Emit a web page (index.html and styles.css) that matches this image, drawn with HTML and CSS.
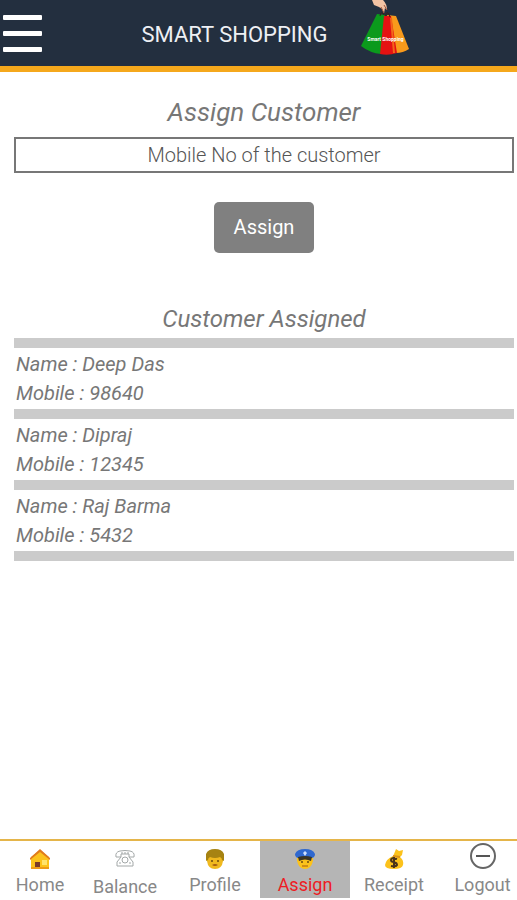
FILE: index.html
```html
<!DOCTYPE html>
<html lang="en">
<head>
    <meta charset="UTF-8">
    <meta name="viewport" content="width=device-width, initial-scale=1.0">
    <title>Smart Shopping</title>
    <link rel="stylesheet" href="styles.css">
</head>
<body>
    <header class="header">
        <button class="menu" type="button" aria-label="Menu">
            <span></span>
            <span></span>
            <span></span>
        </button>
        <div class="brand">
            <h1>SMART SHOPPING</h1>
            <div class="logo">
                <svg viewBox="0 0 50 56" width="50" height="56" aria-hidden="true">
                    <path d="M17 14 L1 46 Q10 53 21 54 L25 15 Z" fill="#0b9a1c"/>
                    <path d="M27 15 L36 16 L49 49 Q43 53 36 53 Z" fill="#f99a1b"/>
                    <path d="M24 16 L31 16 L37 53 Q28 56 20 54 Z" fill="#e51212"/>
                    <path d="M31 18 L34 53" stroke="#f3661a" stroke-width="2"/>
                    <path d="M20 16 Q21 10 24 15 M25 16 Q28 9 30 17" fill="none" stroke="#3a2418" stroke-width="1"/>
                    <path d="M12 0 L23 0 Q27 4 27 10 L25 8 L24 13 L22 9 L19 7 L14 5 Z" fill="#f3c3a4"/>
                    <path d="M21 7 L24 13 M24 5 L27 10" fill="none" stroke="#a5583c" stroke-width="1"/>
                </svg>
                <span class="logo-text">Smart Shopping</span>
            </div>
        </div>
    </header>

    <main class="container">
        <form class="assign">
            <h2><label for="mobile">Assign Customer</label></h2>
            <input id="mobile" type="text" placeholder="Mobile No of the customer">
            <button type="button">Assign</button>
        </form>

        <h2 class="list-title">Customer Assigned</h2>
        <ul class="customers">
            <li>
                <p>Name : Deep Das</p>
                <p>Mobile : 98640</p>
            </li>
            <li>
                <p>Name : Dipraj</p>
                <p>Mobile : 12345</p>
            </li>
            <li>
                <p>Name : Raj Barma</p>
                <p>Mobile : 5432</p>
            </li>
        </ul>
    </main>

    <nav class="tabs">
        <a href="#">
            <svg viewBox="0 0 22 22" width="22" height="22" aria-hidden="true">
                <path d="M2 9 L11 2 L20 9 L20 20 Q11 22 2 20 Z" fill="#fcc21b"/>
                <path d="M1 10 L11 1 L21 10 L21 12 L11 4 L1 12 Z" fill="#e07a1c"/>
                <rect x="6" y="14" width="5" height="6" fill="#7a3b2a"/>
                <rect x="13" y="12" width="5" height="5" fill="#ffe36e"/>
                <path d="M2 20 H20" stroke="#ee9b1a" stroke-width="2"/>
            </svg>
            Home
        </a>
        <a href="#" class="low">
            <svg viewBox="0 0 22 22" width="22" height="22" aria-hidden="true">
                <g fill="none" stroke="#a3a8a8" stroke-width="1">
                    <path d="M2 9 Q1 4 6 3 Q11 2 16 3 Q21 4 20 9 L15 9 L15 6 H7 L7 9 Z"/>
                    <path d="M7 9 L3 14 V18 H19 V14 L15 9"/>
                    <circle cx="11" cy="12" r="3"/>
                    <path d="M8 6 V4 M11 6 V4 M14 6 V4 M5 15 H7 M15 15 H17"/>
                </g>
            </svg>
            Balance
        </a>
        <a href="#">
            <svg viewBox="0 0 22 22" width="22" height="22" aria-hidden="true">
                <path d="M3 8 H19 V13 Q18 21 11 21 Q4 21 3 13 Z" fill="#f0b91f"/>
                <path d="M2 13 V6 Q4 1 11 1 Q18 1 20 6 V13 L18 12 Q18 10 16 9 Q11 11 6 9 Q4 10 4 12 Z" fill="#a68312"/>
                <circle cx="8" cy="13" r="1" fill="#6b4a10"/>
                <circle cx="14" cy="13" r="1" fill="#6b4a10"/>
                <path d="M8 17 Q11 15 14 17 Q11 19 8 17" fill="#a55b12"/>
            </svg>
            Profile
        </a>
        <a href="#" class="active">
            <svg viewBox="0 0 22 22" width="22" height="22" aria-hidden="true">
                <path d="M3 9 H19 V13 Q17 21 11 21 Q5 21 3 13 Z" fill="#fcc21b"/>
                <path d="M1 6 Q3 1 11 1 Q19 1 21 6 Q21 9 18 10 H4 Q1 9 1 6 Z" fill="#2f68cf"/>
                <path d="M4 9 Q11 7 18 9 L17 13 Q11 10 5 13 Z" fill="#3a3527"/>
                <path d="M11 3 L13 5 L11 8 L9 5 Z" fill="#cfe0ff"/>
                <circle cx="8" cy="14" r="1" fill="#6b4a10"/>
                <circle cx="14" cy="14" r="1" fill="#6b4a10"/>
                <path d="M8 18 H14" stroke="#a55b12" stroke-width="1"/>
            </svg>
            Assign
        </a>
        <a href="#">
            <svg viewBox="0 0 22 22" width="22" height="22" aria-hidden="true">
                <path d="M11 6 L13 1 L16 3 L20 2 L19 7 L17 9 Q21 12 20 17 Q19 21 11 21 Q2 21 2 17 Q3 11 10 8 Z" fill="#fcc21b"/>
                <path d="M10 8 L17 9" stroke="#d9901a" stroke-width="2"/>
                <path d="M14 11 Q8 9 8 12 Q8 14 11 14 Q14 15 14 17 Q13 19 8 18 M11 9 V20" fill="none" stroke="#4a331a" stroke-width="2"/>
            </svg>
            Receipt
        </a>
        <a href="#" class="logout">
            <svg viewBox="0 0 28 28" width="28" height="28" aria-hidden="true">
                <circle cx="14" cy="14" r="12" fill="none" stroke="#666" stroke-width="2"/>
                <path d="M7 14 H21" stroke="#555" stroke-width="2"/>
            </svg>
            Logout
        </a>
    </nav>
</body>
</html>
```

FILE: styles.css
```css
* {
    box-sizing: border-box;
}
body {
    font-family: Roboto, "Liberation Sans", sans-serif;
    margin: 0;
    min-height: 100vh;
    display: flex;
    flex-direction: column;
    background-color: #fff;
    color: #777;
}
.header {
    display: flex;
    align-items: center;
    height: 72px;
    padding: 0 7px 0 3px;
    background-color: #232f3f;
    border-bottom: 6px solid #f5a81c;
}
.menu {
    display: flex;
    flex-direction: column;
    gap: 11px;
    width: 39px;
    padding: 0;
    border: none;
    background: none;
    cursor: pointer;
}
.menu span {
    height: 5px;
    border-radius: 1px;
    background-color: #fff;
}
.brand {
    flex: 1;
    display: flex;
    justify-content: center;
    align-items: center;
    gap: 33px;
}
.brand h1 {
    margin: 0;
    padding-top: 2px;
    font-size: 22px;
    font-weight: 400;
    color: #eef0f4;
}
.logo {
    position: relative;
    height: 66px;
}
.logo-text {
    position: absolute;
    top: 35px;
    left: 0;
    width: 100%;
    font-size: 5px;
    font-weight: 700;
    line-height: 8px;
    text-align: center;
    white-space: nowrap;
    color: #fff;
}
.container {
    flex: 1;
    padding: 24px 3px 24px 14px;
}
h2 {
    margin: 0;
    font-size: 26px;
    font-weight: 400;
    font-style: italic;
    line-height: 32px;
    text-align: center;
    color: #777;
}
h2.list-title {
    font-size: 24px;
}
.assign {
    display: flex;
    flex-direction: column;
    align-items: center;
    margin-bottom: 50px;
}
.assign input {
    width: 100%;
    height: 36px;
    margin: 9px 0 29px;
    border: 2px solid #777;
    border-radius: 0;
    background-color: #fff;
    font-family: inherit;
    font-size: 20px;
    font-weight: 300;
    text-align: center;
    color: #555;
}
.assign input::placeholder {
    color: #555;
}
.assign button {
    padding: 13px 20px;
    border: none;
    border-radius: 5px;
    background-color: #808080;
    font-family: inherit;
    font-size: 20px;
    line-height: 25px;
    color: #fff;
    cursor: pointer;
}
.customers {
    margin: 3px 0 0;
    padding: 0;
    list-style: none;
    border-top: 10px solid #cbcbcb;
}
.customers li {
    padding: 2px 2px 1px;
    border-bottom: 10px solid #cbcbcb;
    font-size: 20px;
    font-style: italic;
    line-height: 29px;
    color: #777;
}
.customers p {
    margin: 0;
}
.tabs {
    display: grid;
    grid-template-columns: 80fr 90fr 90fr 90fr 88fr 79fr;
    height: 61px;
    padding-bottom: 2px;
    border-top: 2px solid #e5b54a;
}
.tabs a {
    display: flex;
    flex-direction: column;
    align-items: center;
    gap: 4px;
    padding-top: 7px;
    font-size: 18px;
    line-height: 22px;
    text-decoration: none;
    color: #888;
}
.tabs a.low {
    gap: 6px;
}
.tabs a.active {
    background-color: #b5b5b5;
    color: #ed1c24;
}
.tabs a.logout {
    gap: 4px;
    padding: 1px 0 0 10px;
}
```
